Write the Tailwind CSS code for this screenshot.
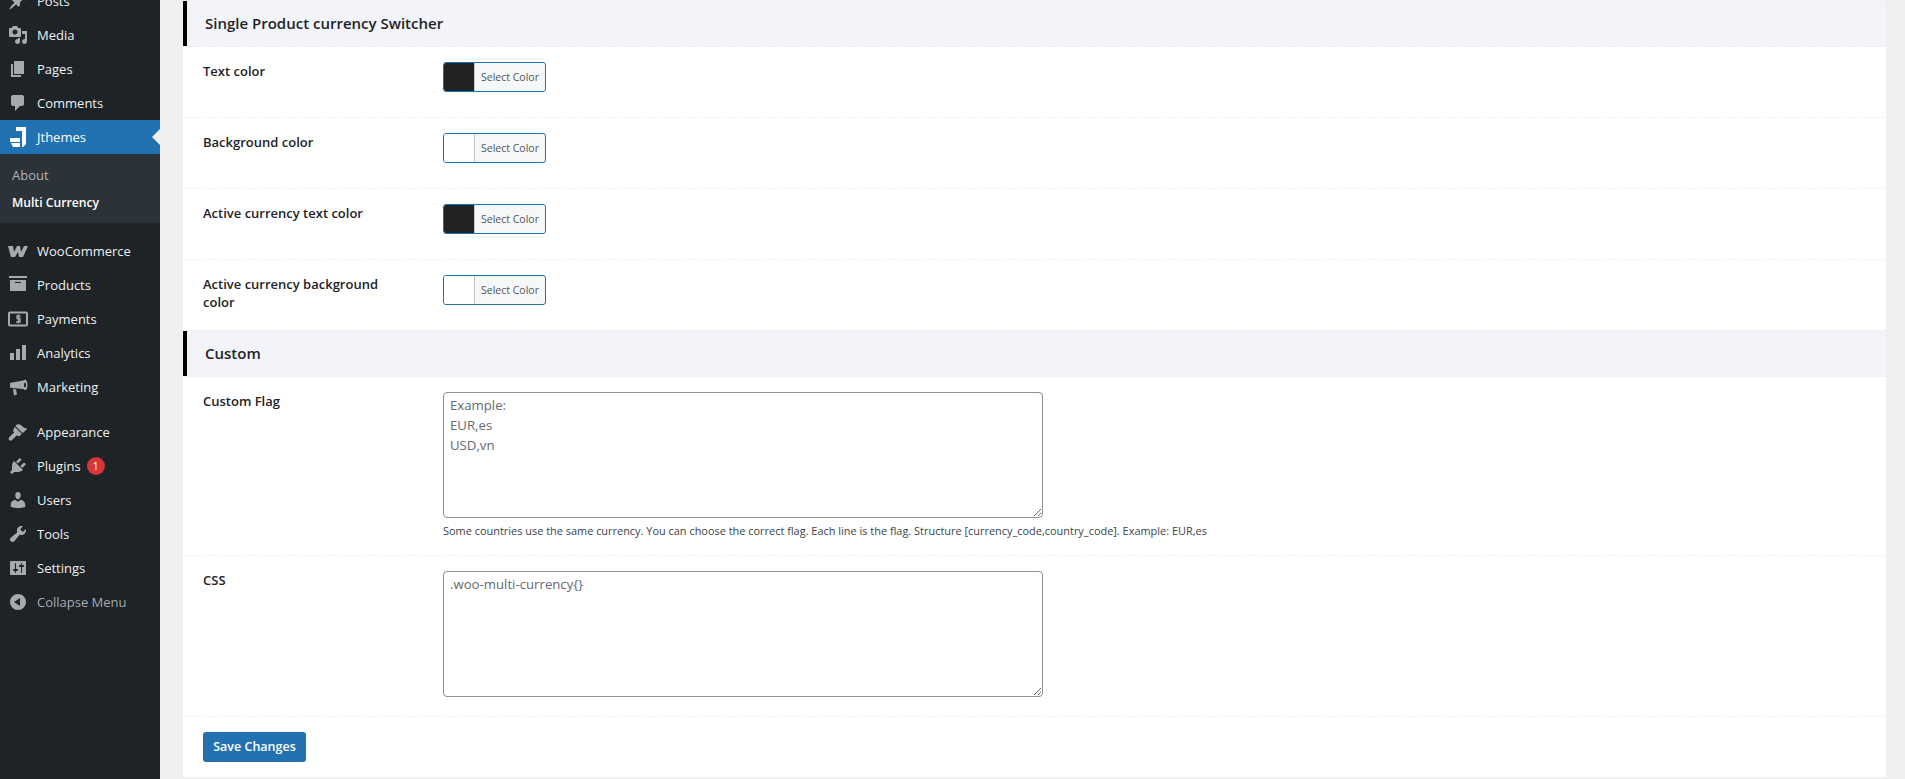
<!DOCTYPE html>
<html lang="en">
<head>
    <meta charset="UTF-8">
    <title>Multi Currency</title>
    <script src="https://cdn.jsdelivr.net/npm/@tailwindcss/browser@4"></script>
</head>
<body class="h-[779px] overflow-hidden bg-[#f0f0f1] font-['Open_Sans','Noto_Sans',sans-serif] text-[#1d2327]">
<div class="flex h-[779px]">
    <!-- admin menu -->
    <nav class="w-[160px] shrink-0 bg-[#1d2327] text-[13px] text-[#f0f0f1]">
        <ul class="-mt-[16px]">
            <li class="flex h-[34px] items-center"><span class="flex w-[36px] justify-center"><svg class="w-5 h-5 fill-[#a7aaad]" viewBox="0 0 20 20"><path d="M10.44 3.02l1.82-1.82 6.36 6.35-1.83 1.82c-1.05-.68-2.48-.57-3.41.36l-.75.75c-.92.93-1.04 2.35-.35 3.41l-1.83 1.82-2.41-2.41-2.8 2.79c-.42.42-3.38 2.71-3.8 2.29s1.86-3.39 2.28-3.81l2.79-2.79L4.1 9.36l1.83-1.82c1.05.69 2.48.57 3.4-.36l.75-.75c.93-.92 1.05-2.35.36-3.41z"/></svg></span><span class="mt-[2px] ml-px">Posts</span></li>
            <li class="flex h-[34px] items-center"><span class="flex w-[36px] justify-center"><svg class="w-5 h-5 fill-[#a7aaad]" viewBox="0 0 20 20"><path d="M13 11V4c0-.55-.45-1-1-1h-1.67L9 1H5L3.67 3H2c-.55 0-1 .45-1 1v7c0 .55.45 1 1 1h10c.55 0 1-.45 1-1zM7 4.500c1.38 0 2.500 1.120 2.500 2.500S8.380 9.500 7 9.500 4.500 8.380 4.500 7 5.620 4.500 7 4.500zM14 6h5v10.500c0 1.380-1.120 2.500-2.500 2.500S14 17.880 14 16.500s1.120-2.500 2.500-2.500c.17 0 .34.020.5.050V9h-3V6zm-4 8.050V13h2v3.500c0 1.380-1.120 2.500-2.500 2.500S7 17.880 7 16.500 8.120 14 9.500 14c.17 0 .34.020.5.050z"/></svg></span><span class="mt-[2px] ml-px">Media</span></li>
            <li class="flex h-[34px] items-center"><span class="flex w-[36px] justify-center"><svg class="w-5 h-5 fill-[#a7aaad]" viewBox="0 0 20 20"><path d="M6 15V2h10v13H6zm-1 1h8v2H3V5h2v11z"/></svg></span><span class="mt-[2px] ml-px">Pages</span></li>
            <li class="flex h-[34px] items-center"><span class="flex w-[36px] justify-center"><svg class="w-5 h-5 fill-[#a7aaad]" viewBox="0 0 20 20"><path d="M5 2h9c1.100 0 2 .9 2 2v7c0 1.100-.9 2-2 2h-2l-5 5v-5H5c-1.100 0-2-.9-2-2V4c0-1.100.9-2 2-2z"/></svg></span><span class="mt-[2px] ml-px">Comments</span></li>
            <li class="relative flex h-[34px] items-center bg-[#2271b1] text-white"><span class="flex w-[36px] justify-center"><svg class="w-5 h-5 fill-white" viewBox="0 0 20 20"><path d="M8 0h10v17l-3 3h-1V4H8zM2 11h10v4H2zM3 16h9v4H5z"/></svg></span><span class="mt-[2px] ml-px">Jthemes</span><span class="absolute right-0 top-[9px] border-y-[8px] border-r-[8px] border-y-transparent border-r-[#f0f0f1]"></span></li>
            <li class="h-[69px] bg-[#2c3338] pt-[7px]">
                <a class="flex h-[27px] items-center pt-[2px] pl-3 text-[#c3c4c7]/90">About</a>
                <a class="flex h-[28px] items-center pt-[2px] pl-3 text-[12.2px] font-semibold text-white">Multi Currency</a>
            </li>
            <li class="mt-[11px] flex h-[34px] items-center"><span class="flex w-[36px] justify-center"><svg class="w-5 h-5 fill-[#a7aaad]" viewBox="0 0 20 20"><path d="M0 5h5l1 6 3-6h3l1 6 3-6h4l-5 11h-4l-1-5-3 5H3z"/></svg></span><span class="mt-[2px] ml-px">WooCommerce</span></li>
            <li class="flex h-[34px] items-center"><span class="flex w-[36px] justify-center"><svg class="w-5 h-5 fill-[#a7aaad]" viewBox="0 0 20 20"><path d="M1 1h18v2H1zM2 5h16v11H2zm5 2v1h6V7z" fill-rule="evenodd"/></svg></span><span class="mt-[2px] ml-px">Products</span></li>
            <li class="flex h-[34px] items-center"><span class="flex w-[36px] justify-center"><svg class="w-5 h-5" viewBox="0 0 20 20"><rect x="1" y="3.500" width="18" height="13" rx="1" fill="none" stroke="#a7aaad" stroke-width="2"/><path d="M12.500 7H9v2.500h3V13H8M10.500 5.500v9" fill="none" stroke="#a7aaad" stroke-width="1.300"/></svg></span><span class="mt-[2px] ml-px">Payments</span></li>
            <li class="flex h-[34px] items-center"><span class="flex w-[36px] justify-center"><svg class="w-5 h-5 fill-[#a7aaad]" viewBox="0 0 20 20"><path d="M2 10h4v7H2zM8 6h4v11H8zM14 2h4v15h-4z"/></svg></span><span class="mt-[2px] ml-px">Analytics</span></li>
            <li class="flex h-[34px] items-center"><span class="flex w-[36px] justify-center"><svg class="w-5 h-5 fill-[#a7aaad]" viewBox="0 0 20 20"><path d="M18 3c1 1 1.500 3 1.500 5s-.5 4-1.500 5c-1 .4-2-.5-2.500-1L4 11 2 10.500V6l2-.5 11.500-2c.5-.4 1.500-.9 2.500-.5zm-1 2.500c-.7 0-1 1.200-1 2.500s.3 2.500 1 2.500 1-1.200 1-2.500-.3-2.500-1-2.500zM5 12l3 .5 1 5-3 1z" fill-rule="evenodd"/></svg></span><span class="mt-[2px] ml-px">Marketing</span></li>
            <li class="mt-[11px] flex h-[34px] items-center"><span class="flex w-[36px] justify-center"><svg class="w-5 h-5 fill-[#a7aaad]" viewBox="0 0 20 20"><path d="M14.480 11.060L7.410 3.990l1.500-1.500c.500-.560 2.300-.470 3.510.320 1.210.800 1.430 1.280 2.600 2.170 1.060.820 2.020 1.240 2.870 1.380.570.100 1.380.170 1.110.860-.8.180-3.910 3.870-4.520 3.840zM6.700 4.700l7.060 7.060-2.120 2.120c-.53.530-1.410.530-1.940 0l-.71-.71-4.950 4.950c-.780.780-2.050.780-2.830 0s-.78-2.050 0-2.830l4.950-4.950-.71-.71c-.53-.53-.53-1.410 0-1.940z"/></svg></span><span class="mt-[2px] ml-px">Appearance</span></li>
            <li class="flex h-[34px] items-center"><span class="flex w-[36px] justify-center"><svg class="w-5 h-5 fill-[#a7aaad]" viewBox="0 0 20 20"><path d="M13.110 4.360L9.870 7.600 8 5.730l3.240-3.240c.35-.34 1.050-.2 1.560.32.52.510.660 1.210.310 1.550zm-8 1.770l.91-1.120 9.010 9.010-1.190.84c-.710.710-2.630 1.160-3.820 1.160H6.140L4.900 17.260c-.59.590-1.540.59-2.120 0-.59-.58-.59-1.530 0-2.120l1.240-1.240v-3.880c0-1.130.4-3.180 1.090-3.890zm7.260 3.970l3.240-3.240c.34-.35 1.040-.21 1.550.31.520.51.660 1.210.31 1.550l-3.240 3.250z"/></svg></span><span class="mt-[2px] ml-px">Plugins</span><span class="ml-[6px] flex h-[18px] w-[18px] items-center justify-center rounded-full bg-[#d63638] text-[11px] text-white">1</span></li>
            <li class="flex h-[34px] items-center"><span class="flex w-[36px] justify-center"><svg class="w-5 h-5 fill-[#a7aaad]" viewBox="0 0 20 20"><path d="M10 9.250c-2.270 0-2.730-3.440-2.730-3.440C7 4.020 7.820 2 9.970 2c2.160 0 2.980 2.020 2.710 3.810 0 0-.41 3.440-2.680 3.440zm0 2.570L12.720 10c2.390 0 4.520 2.330 4.520 4.530v2.490s-3.650 1.130-7.240 1.130c-3.650 0-7.240-1.130-7.240-1.130v-2.490c0-2.250 1.940-4.480 4.640-4.480z"/></svg></span><span class="mt-[2px] ml-px">Users</span></li>
            <li class="flex h-[34px] items-center"><span class="flex w-[36px] justify-center"><svg class="w-5 h-5 fill-[#a7aaad]" viewBox="0 0 20 20"><path d="M16.680 9.770c-1.340 1.340-3.300 1.670-4.950.99l-5.410 6.520c-.99.990-2.590.990-3.570 0-.99-.98-.99-2.580 0-3.570l6.520-5.420c-.68-1.650-.35-3.610.99-4.950 1.280-1.280 3.120-1.620 4.720-1.060l-2.890 2.890 2.820 2.820 2.860-2.870c.53 1.580.18 3.390-1.090 4.650z"/></svg></span><span class="mt-[2px] ml-px">Tools</span></li>
            <li class="flex h-[34px] items-center"><span class="flex w-[36px] justify-center"><svg class="w-5 h-5 fill-[#a7aaad]" viewBox="0 0 20 20"><path d="M18 16V4c0-.55-.45-1-1-1H3c-.55 0-1 .45-1 1v12c0 .55.45 1 1 1h14c.55 0 1-.45 1-1zM8 11h1c.55 0 1 .45 1 1s-.45 1-1 1H8v1.500c0 .28-.22.5-.5.5s-.5-.22-.5-.5V13H6c-.55 0-1-.45-1-1s.45-1 1-1h1V5.500c0-.28.22-.5.5-.5s.5.22.5.5V11zm5-2h-1c-.55 0-1-.45-1-1s.45-1 1-1h1V5.500c0-.28.22-.5.5-.5s.5.22.5.5V7h1c.55 0 1 .45 1 1s-.45 1-1 1h-1v5.500c0 .28-.22.5-.5.5s-.5-.22-.5-.5V9z"/></svg></span><span class="mt-[2px] ml-px">Settings</span></li>
            <li class="flex h-[34px] items-center text-[#a7aaad]"><span class="flex w-[36px] justify-center"><svg class="w-5 h-5 fill-[#a7aaad]" viewBox="0 0 20 20"><path d="M10 2a8 8 0 1 0 0 16 8 8 0 0 0 0-16zm2 4v8L6 10z" fill-rule="evenodd"/></svg></span><span class="mt-[2px] ml-px">Collapse Menu</span></li>
        </ul>
    </nav>

    <!-- settings panel -->
    <main class="ml-[23px] mr-[19px] h-[777px] flex-1 bg-white">
        <h2 class="flex h-[47px] items-center border-y border-dashed border-[#f0f0f1] bg-[#f3f4f9] pl-[22px] text-[15px] font-semibold shadow-[inset_4px_0_0_#000]">Single Product currency Switcher</h2>

        <div class="flex h-[71px] border-b border-dashed border-[#f0f0f1] pl-5">
            <label class="w-[240px] pt-[15px] text-[13px] leading-[18px] font-semibold">Text color</label>
            <div class="pt-[15px]"><div class="flex h-[30px] w-[103px] overflow-hidden rounded-[3px] border border-[#2271b1] bg-[#f6f7f7]"><span class="w-[31px] border-r border-[#c3c4c7] bg-[#222222]"></span><span class="flex-1 text-center text-[10.5px] leading-[28px] text-[#50575e]">Select Color</span></div></div>
        </div>
        <div class="flex h-[71px] border-b border-dashed border-[#f0f0f1] pl-5">
            <label class="w-[240px] pt-[15px] text-[13px] leading-[18px] font-semibold">Background color</label>
            <div class="pt-[15px]"><div class="flex h-[30px] w-[103px] overflow-hidden rounded-[3px] border border-[#2271b1] bg-[#f6f7f7]"><span class="w-[31px] border-r border-[#c3c4c7] bg-white"></span><span class="flex-1 text-center text-[10.5px] leading-[28px] text-[#50575e]">Select Color</span></div></div>
        </div>
        <div class="flex h-[71px] border-b border-dashed border-[#f0f0f1] pl-5">
            <label class="w-[240px] pt-[15px] text-[13px] leading-[18px] font-semibold">Active currency text color</label>
            <div class="pt-[15px]"><div class="flex h-[30px] w-[103px] overflow-hidden rounded-[3px] border border-[#2271b1] bg-[#f6f7f7]"><span class="w-[31px] border-r border-[#c3c4c7] bg-[#222222]"></span><span class="flex-1 text-center text-[10.5px] leading-[28px] text-[#50575e]">Select Color</span></div></div>
        </div>
        <div class="flex h-[70px] pl-5">
            <label class="w-[240px] pt-[15px] pr-[50px] text-[13px] leading-[18px] font-semibold">Active currency background color</label>
            <div class="pt-[15px]"><div class="flex h-[30px] w-[103px] overflow-hidden rounded-[3px] border border-[#2271b1] bg-[#f6f7f7]"><span class="w-[31px] border-r border-[#c3c4c7] bg-white"></span><span class="flex-1 text-center text-[10.5px] leading-[28px] text-[#50575e]">Select Color</span></div></div>
        </div>

        <h2 class="flex h-[47px] items-center border-y border-dashed border-[#f0f0f1] bg-[#f3f4f9] pl-[22px] text-[15px] font-semibold shadow-[inset_4px_0_0_#000]">Custom</h2>

        <div class="flex h-[179px] border-b border-dashed border-[#f0f0f1] pl-5">
            <label class="w-[240px] pt-[15px] text-[13px] leading-[18px] font-semibold">Custom Flag</label>
            <div class="pt-[15px]">
                <textarea class="block h-[126px] w-[600px] rounded border border-[#8c8f94] px-[6px] py-[2px] text-[13.2px] leading-[20px] text-[#646970] placeholder:text-[#646970]" placeholder="Example:
EUR,es
USD,vn"></textarea>
                <p class="mt-[4px] text-[10.95px] leading-[18px] text-[#3c434a]">Some countries use the same currency. You can choose the correct flag. Each line is the flag. Structure [currency_code,country_code]. Example: EUR,es</p>
            </div>
        </div>
        <div class="flex h-[161px] border-b border-dashed border-[#f0f0f1] pl-5">
            <label class="w-[240px] pt-[15px] text-[13px] leading-[18px] font-semibold">CSS</label>
            <div class="pt-[15px]">
                <textarea class="block h-[126px] w-[600px] rounded border border-[#8c8f94] px-[6px] py-[2px] text-[13.2px] leading-[20px] text-[#646970]">.woo-multi-currency{}</textarea>
            </div>
        </div>
        <div class="pt-[15px] pl-5">
            <button class="h-[30px] w-[103px] rounded-[3px] bg-[#2271b1] text-[12.5px] font-semibold text-white">Save Changes</button>
        </div>
    </main>
</div>
</body>
</html>
